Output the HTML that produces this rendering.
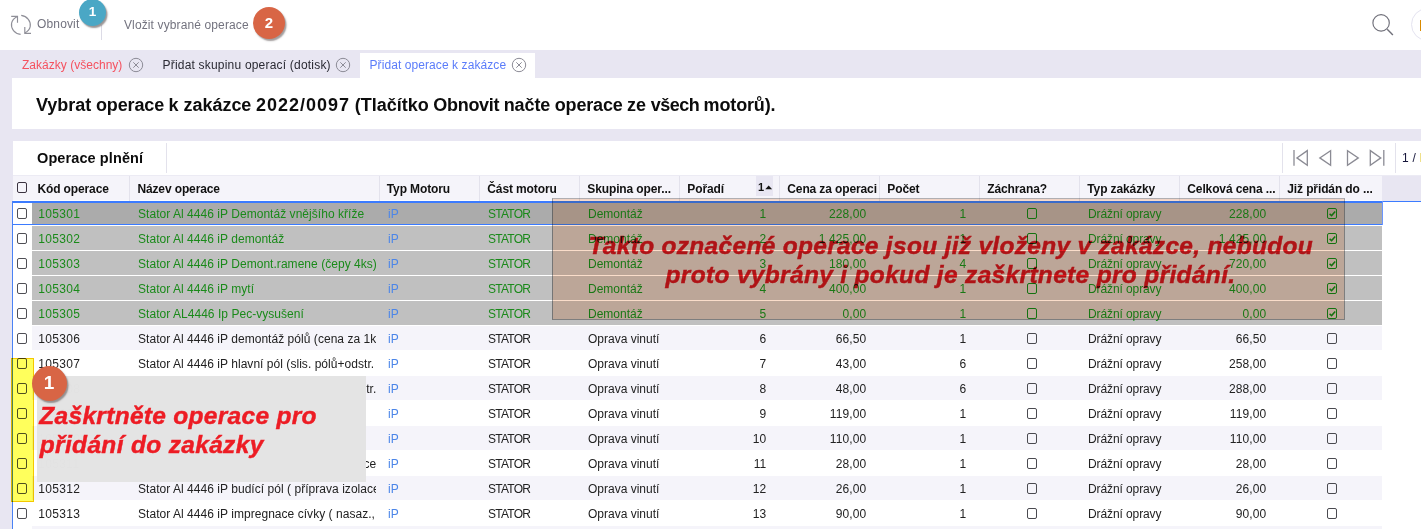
<!DOCTYPE html><html><head><meta charset="utf-8"><title>Pridat operace</title><style>
*{box-sizing:border-box;margin:0;padding:0}
html,body{width:1421px;height:529px;overflow:hidden;background:#fff}
body{position:relative;font-family:"Liberation Sans",sans-serif;font-size:12px;color:#222}
.abs{position:absolute}
.lav{background:#e8e6f2}
.t{position:absolute;white-space:nowrap;line-height:14px}
.tb{color:#73737f;font-size:12px;letter-spacing:.15px}
.tab{font-size:12px;top:58px;letter-spacing:.02px}
.hd{position:absolute;top:182px;font-weight:bold;color:#111;white-space:nowrap;line-height:14px;font-size:12px;letter-spacing:-.12px}
.sep{position:absolute;top:176px;width:1px;height:25px;background:#e3e2ec}
.row{position:absolute;left:13px;width:1369px;height:24px}
.row .c1{top:4px}
.row .bg{position:absolute;left:19px;right:0;top:0;bottom:0}
.c{position:absolute;top:6px;line-height:14px;white-space:nowrap;overflow:hidden}
.num{text-align:right;letter-spacing:.12px}
.code{letter-spacing:.32px}
.g{color:#1a8a1a}
.ip{color:#4c86e8}
.cb{position:absolute;top:7px;width:10.2px;height:11px;border:1.5px solid #4a4a50;border-radius:2px;background:transparent}
.stat{letter-spacing:-.75px}
.nm{letter-spacing:.04px}
.dr{letter-spacing:-.1px}
.g .cb, .cb.g{border-color:#148414}
.circ{position:absolute;border-radius:50%;color:#fff;font-weight:bold;text-align:center}
</style></head><body>
<div class="abs lav" style="left:0;top:50px;width:1421px;height:479px"></div>
<div class="abs" style="left:12px;top:78px;width:1409px;height:51px;background:#fff"></div>
<div class="abs" style="left:13px;top:141px;width:1408px;height:388px;background:#fff"></div>
<div class="abs" style="left:13px;top:175px;width:1408px;height:1px;background:#ecebf4"></div>
<div class="abs" style="left:13px;top:176px;width:1369px;height:25px;background:#f5f4fa"></div>
<div class="abs lav" style="left:1382px;top:176px;width:39px;height:25px"></div>
<div class="abs" style="left:13px;top:200px;width:1369px;height:1px;background:#fdfdff"></div>
<svg class="abs" style="left:9px;top:13px" width="24" height="24" viewBox="0 0 24 24" fill="none" stroke="#8f8f98" stroke-width="1.15" stroke-linecap="butt" stroke-linejoin="miter"><path d="M11.6 21.4 C5.6 20.6 1.6 15.6 2.6 10.2 C3.1 7.5 5.2 5.2 8.4 3.6"/><path d="M2.2 3.4 H8.5 V9.8"/><path d="M12.2 2.4 C18.2 3.2 22.2 8.2 21.2 13.6 C20.7 16.3 18.8 18.4 15.9 20.0"/><path d="M22 20.3 H15.8 V14"/></svg>
<div class="t tb" style="left:37px;top:17px">Obnovit</div>
<div class="abs" style="left:101px;top:25px;width:1px;height:15px;background:#dcdbe6"></div>
<div class="t tb" style="left:124px;top:18px;letter-spacing:.12px">Vložit vybrané operace</div>
<div class="circ" style="left:79px;top:-1px;width:27px;height:27px;background:#4aa7c5;box-shadow:1.5px 2px 1.5px rgba(70,60,60,.55);font-size:13.5px;line-height:26.5px">1</div>
<div class="circ" style="left:253px;top:7px;width:32px;height:32px;background:#d86545;box-shadow:1.5px 2px 1.5px rgba(70,60,60,.5);font-size:15px;line-height:31.5px">2</div>
<svg class="abs" style="left:1368px;top:10px" width="30" height="30" viewBox="0 0 30 30" fill="none" stroke="#70707a" stroke-width="1.15"><circle cx="13.1" cy="12.9" r="8.2"/><path d="M19.2 19.3 L24.9 25" stroke-width="1.4"/></svg>
<div class="abs" style="left:1411px;top:8px;width:33px;height:33px;border:1.3px solid #e4e3f0;border-radius:50%"></div>
<div class="abs" style="left:1420px;top:20px;width:2px;height:11px;background:#d98a00"></div>
<div class="abs" style="left:360px;top:53px;width:175px;height:25px;background:#fff"></div>
<div class="t tab" style="left:22px;color:#f5515f">Zakázky (všechny)</div>
<svg class="abs" style="left:127.6px;top:57.4px" width="16" height="16" viewBox="0 0 16 16" fill="none" stroke="#8c8b96" stroke-width="1"><circle cx="8" cy="8" r="6.7"/><path d="M5.3 5.3 L10.7 10.7 M10.7 5.3 L5.3 10.7"/></svg>
<div class="t tab" style="left:162.5px;color:#2a2a33;letter-spacing:.2px">Přidat skupinu operací (dotisk)</div>
<svg class="abs" style="left:335px;top:57.4px" width="16" height="16" viewBox="0 0 16 16" fill="none" stroke="#8c8b96" stroke-width="1"><circle cx="8" cy="8" r="6.7"/><path d="M5.3 5.3 L10.7 10.7 M10.7 5.3 L5.3 10.7"/></svg>
<div class="t tab" style="left:369.5px;color:#5b7cfa;letter-spacing:.08px">Přidat operace k zakázce</div>
<svg class="abs" style="left:510.5px;top:57.4px" width="16" height="16" viewBox="0 0 16 16" fill="none" stroke="#8c8b96" stroke-width="1"><circle cx="8" cy="8" r="6.7"/><path d="M5.3 5.3 L10.7 10.7 M10.7 5.3 L5.3 10.7"/></svg>
<div class="t" style="left:36px;top:94px;font-size:18px;line-height:22px;font-weight:bold;color:#0c0c0c;letter-spacing:0px">Vybrat</div>
<div class="t" style="left:96px;top:94px;font-size:18px;line-height:22px;font-weight:bold;color:#0c0c0c;letter-spacing:-0.15px">operace</div>
<div class="t" style="left:168.6px;top:94px;font-size:18px;line-height:22px;font-weight:bold;color:#0c0c0c;letter-spacing:0px">k</div>
<div class="t" style="left:183.6px;top:94px;font-size:18px;line-height:22px;font-weight:bold;color:#0c0c0c;letter-spacing:-0.05px">zakázce</div>
<div class="t" style="left:256px;top:94px;font-size:18px;line-height:22px;font-weight:bold;color:#0c0c0c;letter-spacing:1px">2022/0097</div>
<div class="t" style="left:354.8px;top:94px;font-size:18px;line-height:22px;font-weight:bold;color:#0c0c0c;letter-spacing:0px">(Tlačítko</div>
<div class="t" style="left:433.3px;top:94px;font-size:18px;line-height:22px;font-weight:bold;color:#0c0c0c;letter-spacing:-0.3px">Obnovit</div>
<div class="t" style="left:503.7px;top:94px;font-size:18px;line-height:22px;font-weight:bold;color:#0c0c0c;letter-spacing:-0.1px">načte</div>
<div class="t" style="left:554.7px;top:94px;font-size:18px;line-height:22px;font-weight:bold;color:#0c0c0c;letter-spacing:-0.15px">operace</div>
<div class="t" style="left:626.9px;top:94px;font-size:18px;line-height:22px;font-weight:bold;color:#0c0c0c;letter-spacing:0px">ze</div>
<div class="t" style="left:650.8px;top:94px;font-size:18px;line-height:22px;font-weight:bold;color:#0c0c0c;letter-spacing:-0.5px">všech</div>
<div class="t" style="left:703.6px;top:94px;font-size:18px;line-height:22px;font-weight:bold;color:#0c0c0c;letter-spacing:-0.15px">motorů).</div>
<div class="t" style="left:37px;top:149px;font-size:14.5px;line-height:18px;font-weight:bold;color:#0c0c0c;letter-spacing:.1px">Operace plnění</div>
<div class="abs" style="left:166px;top:143px;width:1px;height:30px;background:#e3e2ec"></div>
<div class="abs" style="left:1282px;top:143px;width:1px;height:30px;background:#e3e2ec"></div>
<div class="abs" style="left:1395px;top:143px;width:1px;height:30px;background:#e3e2ec"></div>
<svg class="abs" style="left:1290px;top:146px" width="100" height="24" viewBox="0 0 100 24" fill="none" stroke="#8b8b94" stroke-width="1.3" stroke-linejoin="miter"><path d="M4 4 V19.8"/><path d="M17.3 4.6 V19.2 L6.9 11.9 Z"/><path d="M40.6 4.6 V19.2 L29.8 11.9 Z"/><path d="M57.5 4.6 V19.2 L68.3 11.9 Z"/><path d="M80.3 4.6 V19.2 L90.8 11.9 Z"/><path d="M93.8 4 V19.8"/></svg>
<div class="t" style="left:1402px;top:151px;color:#15153a;letter-spacing:.3px">1 /</div>
<div class="abs" style="left:1420px;top:153px;width:1px;height:9px;background:#efe08a"></div>
<div class="cb" style="left:17px;top:182px;border-color:#3a3340"></div>
<div class="hd" style="left:37.4px">Kód operace</div>
<div class="hd" style="left:137.4px">Název operace</div>
<div class="hd" style="left:386.8px">Typ Motoru</div>
<div class="hd" style="left:487.3px">Část motoru</div>
<div class="hd" style="left:587.3px">Skupina oper...</div>
<div class="hd" style="left:687.3px">Pořadí</div>
<div class="hd" style="left:787.3px">Cena za operaci</div>
<div class="hd" style="left:887.3px">Počet</div>
<div class="hd" style="left:987.3px">Záchrana?</div>
<div class="hd" style="left:1087.3px">Typ zakázky</div>
<div class="hd" style="left:1187.3px">Celková cena ...</div>
<div class="hd" style="left:1287.3px">Již přidán do ...</div>
<div class="sep" style="left:129px"></div>
<div class="sep" style="left:379px"></div>
<div class="sep" style="left:479px"></div>
<div class="sep" style="left:579px"></div>
<div class="sep" style="left:679px"></div>
<div class="sep" style="left:779px"></div>
<div class="sep" style="left:879px"></div>
<div class="sep" style="left:979px"></div>
<div class="sep" style="left:1079px"></div>
<div class="sep" style="left:1179px"></div>
<div class="sep" style="left:1279px"></div>
<div class="abs lav" style="left:756px;top:176px;width:17px;height:20px"></div>
<div class="t" style="left:758px;top:180px;font-weight:bold;font-size:11px;color:#111">1</div>
<svg class="abs" style="left:764.5px;top:185px" width="8" height="5" viewBox="0 0 8 5"><path d="M0.3 4.2 L3.7 0.6 L7.1 4.2 Z" fill="#111"/></svg>
<div class="row g" style="top:203px;height:21px">
<div class="bg" style="background:#ababab"></div>
<div class="cb" style="left:4px;top:5px;border-color:#4f4f55"></div><div class="c c1 code" style="left:25.3px;width:88px">105301</div><div class="c c1 nm" style="left:125px;width:238.2px">Stator Al 4446 iP Demontáž vnějšího kříže</div><div class="c c1 ip" style="left:375px;width:80px">iP</div><div class="c c1 stat" style="left:475px;width:88px">STATOR</div><div class="c c1 " style="left:575px;width:88px">Demontáž</div><div class="c c1 num" style="left:666.6px;width:86.8px">1</div><div class="c c1 num" style="left:766.6px;width:86.8px">228,00</div><div class="c c1 num" style="left:866.6px;width:86.8px">1</div><div class="cb" style="left:1014px;top:5px"></div><div class="c c1 dr" style="left:1075px;width:88px">Drážní opravy</div><div class="c c1 num" style="left:1166.6px;width:86.8px">228,00</div><div class="cb" style="left:1314px;top:5px"></div><svg class="abs" style="left:1313.6px;top:5px" width="11" height="11" viewBox="0 0 11 11" fill="none" stroke="#148414" stroke-width="1.5"><path d="M2.6 5.9 L4.6 7.6 L8.2 3.6"/></svg>
</div>
<div class="row g" style="top:226px">
<div class="bg" style="background:#c0c0c0"></div>
<div class="cb" style="left:4px;top:7px;border-color:#4f4f55"></div><div class="c code" style="left:25.3px;width:88px">105302</div><div class="c nm" style="left:125px;width:238.2px">Stator Al 4446 iP demontáž</div><div class="c ip" style="left:375px;width:80px">iP</div><div class="c stat" style="left:475px;width:88px">STATOR</div><div class="c " style="left:575px;width:88px">Demontáž</div><div class="c num" style="left:666.6px;width:86.8px">2</div><div class="c num" style="left:766.6px;width:86.8px">1 425,00</div><div class="c num" style="left:866.6px;width:86.8px">1</div><div class="cb" style="left:1014px;top:7px"></div><div class="c dr" style="left:1075px;width:88px">Drážní opravy</div><div class="c num" style="left:1166.6px;width:86.8px">1 425,00</div><div class="cb" style="left:1314px;top:7px"></div><svg class="abs" style="left:1313.6px;top:7px" width="11" height="11" viewBox="0 0 11 11" fill="none" stroke="#148414" stroke-width="1.5"><path d="M2.6 5.9 L4.6 7.6 L8.2 3.6"/></svg>
</div>
<div class="row g" style="top:251px">
<div class="bg" style="background:#c0c0c0"></div>
<div class="cb" style="left:4px;top:7px;border-color:#4f4f55"></div><div class="c code" style="left:25.3px;width:88px">105303</div><div class="c nm" style="left:125px;width:238.2px">Stator Al 4446 iP Demont.ramene (čepy 4ks)</div><div class="c ip" style="left:375px;width:80px">iP</div><div class="c stat" style="left:475px;width:88px">STATOR</div><div class="c " style="left:575px;width:88px">Demontáž</div><div class="c num" style="left:666.6px;width:86.8px">3</div><div class="c num" style="left:766.6px;width:86.8px">180,00</div><div class="c num" style="left:866.6px;width:86.8px">4</div><div class="cb" style="left:1014px;top:7px"></div><div class="c dr" style="left:1075px;width:88px">Drážní opravy</div><div class="c num" style="left:1166.6px;width:86.8px">720,00</div><div class="cb" style="left:1314px;top:7px"></div><svg class="abs" style="left:1313.6px;top:7px" width="11" height="11" viewBox="0 0 11 11" fill="none" stroke="#148414" stroke-width="1.5"><path d="M2.6 5.9 L4.6 7.6 L8.2 3.6"/></svg>
</div>
<div class="row g" style="top:276px">
<div class="bg" style="background:#c0c0c0"></div>
<div class="cb" style="left:4px;top:7px;border-color:#4f4f55"></div><div class="c code" style="left:25.3px;width:88px">105304</div><div class="c nm" style="left:125px;width:238.2px">Stator Al 4446 iP mytí</div><div class="c ip" style="left:375px;width:80px">iP</div><div class="c stat" style="left:475px;width:88px">STATOR</div><div class="c " style="left:575px;width:88px">Demontáž</div><div class="c num" style="left:666.6px;width:86.8px">4</div><div class="c num" style="left:766.6px;width:86.8px">400,00</div><div class="c num" style="left:866.6px;width:86.8px">1</div><div class="cb" style="left:1014px;top:7px"></div><div class="c dr" style="left:1075px;width:88px">Drážní opravy</div><div class="c num" style="left:1166.6px;width:86.8px">400,00</div><div class="cb" style="left:1314px;top:7px"></div><svg class="abs" style="left:1313.6px;top:7px" width="11" height="11" viewBox="0 0 11 11" fill="none" stroke="#148414" stroke-width="1.5"><path d="M2.6 5.9 L4.6 7.6 L8.2 3.6"/></svg>
</div>
<div class="row g" style="top:301px">
<div class="bg" style="background:#c0c0c0"></div>
<div class="cb" style="left:4px;top:7px;border-color:#4f4f55"></div><div class="c code" style="left:25.3px;width:88px">105305</div><div class="c nm" style="left:125px;width:238.2px">Stator AL4446 Ip Pec-vysušení</div><div class="c ip" style="left:375px;width:80px">iP</div><div class="c stat" style="left:475px;width:88px">STATOR</div><div class="c " style="left:575px;width:88px">Demontáž</div><div class="c num" style="left:666.6px;width:86.8px">5</div><div class="c num" style="left:766.6px;width:86.8px">0,00</div><div class="c num" style="left:866.6px;width:86.8px">1</div><div class="cb" style="left:1014px;top:7px"></div><div class="c dr" style="left:1075px;width:88px">Drážní opravy</div><div class="c num" style="left:1166.6px;width:86.8px">0,00</div><div class="cb" style="left:1314px;top:7px"></div><svg class="abs" style="left:1313.6px;top:7px" width="11" height="11" viewBox="0 0 11 11" fill="none" stroke="#148414" stroke-width="1.5"><path d="M2.6 5.9 L4.6 7.6 L8.2 3.6"/></svg>
</div>
<div class="row " style="top:326px">
<div class="bg" style="background:#f5f4fa"></div>
<div class="cb" style="left:4px;top:7px;border-color:#4f4f55"></div><div class="c code" style="left:25.3px;width:88px">105306</div><div class="c nm" style="left:125px;width:238.2px">Stator Al 4446 iP demontáž pólů (cena za 1ks)</div><div class="c ip" style="left:375px;width:80px">iP</div><div class="c stat" style="left:475px;width:88px">STATOR</div><div class="c " style="left:575px;width:88px">Oprava vinutí</div><div class="c num" style="left:666.6px;width:86.8px">6</div><div class="c num" style="left:766.6px;width:86.8px">66,50</div><div class="c num" style="left:866.6px;width:86.8px">1</div><div class="cb" style="left:1014px;top:7px"></div><div class="c dr" style="left:1075px;width:88px">Drážní opravy</div><div class="c num" style="left:1166.6px;width:86.8px">66,50</div><div class="cb" style="left:1314px;top:7px"></div>
</div>
<div class="row " style="top:351px">
<div class="bg" style="background:#ffffff"></div>
<div class="cb" style="left:4px;top:7px;border-color:#4f4f55"></div><div class="c code" style="left:25.3px;width:88px">105307</div><div class="c nm" style="left:125px;width:238.2px">Stator Al 4446 iP hlavní pól (slis. pólů+odstr.</div><div class="c ip" style="left:375px;width:80px">iP</div><div class="c stat" style="left:475px;width:88px">STATOR</div><div class="c " style="left:575px;width:88px">Oprava vinutí</div><div class="c num" style="left:666.6px;width:86.8px">7</div><div class="c num" style="left:766.6px;width:86.8px">43,00</div><div class="c num" style="left:866.6px;width:86.8px">6</div><div class="cb" style="left:1014px;top:7px"></div><div class="c dr" style="left:1075px;width:88px">Drážní opravy</div><div class="c num" style="left:1166.6px;width:86.8px">258,00</div><div class="cb" style="left:1314px;top:7px"></div>
</div>
<div class="row " style="top:376px">
<div class="bg" style="background:#f5f4fa"></div>
<div class="cb" style="left:4px;top:7px;border-color:#4f4f55"></div><div class="c code" style="left:25.3px;width:88px">105308</div><div class="c nm" style="left:125px;width:238.2px"></div><div class="c ip" style="left:375px;width:80px">iP</div><div class="c stat" style="left:475px;width:88px">STATOR</div><div class="c " style="left:575px;width:88px">Oprava vinutí</div><div class="c num" style="left:666.6px;width:86.8px">8</div><div class="c num" style="left:766.6px;width:86.8px">48,00</div><div class="c num" style="left:866.6px;width:86.8px">6</div><div class="cb" style="left:1014px;top:7px"></div><div class="c dr" style="left:1075px;width:88px">Drážní opravy</div><div class="c num" style="left:1166.6px;width:86.8px">288,00</div><div class="cb" style="left:1314px;top:7px"></div><div class="c" style="left:327px;width:36.3px;text-align:right">tr.</div>
</div>
<div class="row " style="top:401px">
<div class="bg" style="background:#ffffff"></div>
<div class="cb" style="left:4px;top:7px;border-color:#4f4f55"></div><div class="c code" style="left:25.3px;width:88px">105309</div><div class="c nm" style="left:125px;width:238.2px"></div><div class="c ip" style="left:375px;width:80px">iP</div><div class="c stat" style="left:475px;width:88px">STATOR</div><div class="c " style="left:575px;width:88px">Oprava vinutí</div><div class="c num" style="left:666.6px;width:86.8px">9</div><div class="c num" style="left:766.6px;width:86.8px">119,00</div><div class="c num" style="left:866.6px;width:86.8px">1</div><div class="cb" style="left:1014px;top:7px"></div><div class="c dr" style="left:1075px;width:88px">Drážní opravy</div><div class="c num" style="left:1166.6px;width:86.8px">119,00</div><div class="cb" style="left:1314px;top:7px"></div>
</div>
<div class="row " style="top:426px">
<div class="bg" style="background:#f5f4fa"></div>
<div class="cb" style="left:4px;top:7px;border-color:#4f4f55"></div><div class="c code" style="left:25.3px;width:88px">105310</div><div class="c nm" style="left:125px;width:238.2px"></div><div class="c ip" style="left:375px;width:80px">iP</div><div class="c stat" style="left:475px;width:88px">STATOR</div><div class="c " style="left:575px;width:88px">Oprava vinutí</div><div class="c num" style="left:666.6px;width:86.8px">10</div><div class="c num" style="left:766.6px;width:86.8px">110,00</div><div class="c num" style="left:866.6px;width:86.8px">1</div><div class="cb" style="left:1014px;top:7px"></div><div class="c dr" style="left:1075px;width:88px">Drážní opravy</div><div class="c num" style="left:1166.6px;width:86.8px">110,00</div><div class="cb" style="left:1314px;top:7px"></div>
</div>
<div class="row " style="top:451px">
<div class="bg" style="background:#ffffff"></div>
<div class="cb" style="left:4px;top:7px;border-color:#4f4f55"></div><div class="c code" style="left:25.3px;width:88px">105311</div><div class="c nm" style="left:125px;width:238.2px"></div><div class="c ip" style="left:375px;width:80px">iP</div><div class="c stat" style="left:475px;width:88px">STATOR</div><div class="c " style="left:575px;width:88px">Oprava vinutí</div><div class="c num" style="left:666.6px;width:86.8px">11</div><div class="c num" style="left:766.6px;width:86.8px">28,00</div><div class="c num" style="left:866.6px;width:86.8px">1</div><div class="cb" style="left:1014px;top:7px"></div><div class="c dr" style="left:1075px;width:88px">Drážní opravy</div><div class="c num" style="left:1166.6px;width:86.8px">28,00</div><div class="cb" style="left:1314px;top:7px"></div><div class="c" style="left:327px;width:36.3px;text-align:right">ce</div>
</div>
<div class="row " style="top:476px">
<div class="bg" style="background:#f5f4fa"></div>
<div class="cb" style="left:4px;top:7px;border-color:#4f4f55"></div><div class="c code" style="left:25.3px;width:88px">105312</div><div class="c nm" style="left:125px;width:238.2px">Stator Al 4446 iP budící pól ( příprava izolace)</div><div class="c ip" style="left:375px;width:80px">iP</div><div class="c stat" style="left:475px;width:88px">STATOR</div><div class="c " style="left:575px;width:88px">Oprava vinutí</div><div class="c num" style="left:666.6px;width:86.8px">12</div><div class="c num" style="left:766.6px;width:86.8px">26,00</div><div class="c num" style="left:866.6px;width:86.8px">1</div><div class="cb" style="left:1014px;top:7px"></div><div class="c dr" style="left:1075px;width:88px">Drážní opravy</div><div class="c num" style="left:1166.6px;width:86.8px">26,00</div><div class="cb" style="left:1314px;top:7px"></div>
</div>
<div class="row " style="top:501px">
<div class="bg" style="background:#ffffff"></div>
<div class="cb" style="left:4px;top:7px;border-color:#4f4f55"></div><div class="c code" style="left:25.3px;width:88px">105313</div><div class="c nm" style="left:125px;width:238.2px">Stator Al 4446 iP impregnace cívky ( nasaz.,</div><div class="c ip" style="left:375px;width:80px">iP</div><div class="c stat" style="left:475px;width:88px">STATOR</div><div class="c " style="left:575px;width:88px">Oprava vinutí</div><div class="c num" style="left:666.6px;width:86.8px">13</div><div class="c num" style="left:766.6px;width:86.8px">90,00</div><div class="c num" style="left:866.6px;width:86.8px">1</div><div class="cb" style="left:1014px;top:7px"></div><div class="c dr" style="left:1075px;width:88px">Drážní opravy</div><div class="c num" style="left:1166.6px;width:86.8px">90,00</div><div class="cb" style="left:1314px;top:7px"></div>
</div>
<div class="row " style="top:526px">
<div class="bg" style="background:#f5f4fa"></div>
<div class="cb" style="left:4px;top:7px;border-color:#4f4f55"></div><div class="c code" style="left:25.3px;width:88px">105314</div><div class="c nm" style="left:125px;width:238.2px">Stator Al 4446 iP</div><div class="c ip" style="left:375px;width:80px">iP</div><div class="c stat" style="left:475px;width:88px">STATOR</div><div class="c " style="left:575px;width:88px">Oprava vinutí</div><div class="c num" style="left:666.6px;width:86.8px">14</div><div class="c num" style="left:766.6px;width:86.8px">0,00</div><div class="c num" style="left:866.6px;width:86.8px">1</div><div class="cb" style="left:1014px;top:7px"></div><div class="c dr" style="left:1075px;width:88px">Drážní opravy</div><div class="c num" style="left:1166.6px;width:86.8px">0,00</div><div class="cb" style="left:1314px;top:7px"></div>
</div>
<div class="abs" style="left:12px;top:201px;width:1409px;height:1px;background:#3b7bff"></div>
<div class="abs" style="left:12px;top:202px;width:1371px;height:1px;background:#3b7bff"></div>
<div class="abs" style="left:12px;top:224px;width:1371px;height:1px;background:#3b7bff"></div>
<div class="abs" style="left:1381.5px;top:201px;width:1.5px;height:24px;background:#6b96ff"></div>
<div class="abs" style="left:12px;top:201px;width:1px;height:328px;background:#4a82f5"></div>
<div class="abs" style="left:552px;top:198px;width:793px;height:122px;background:rgb(250,221,202);mix-blend-mode:multiply;border:1px solid #a8a8a8;border-top-color:#b6b6b6;border-left-color:#9c9c9c"></div>
<div style="position:absolute;color:#ed1c24;-webkit-text-stroke:.45px #ed1c24;font-weight:bold;font-style:italic;font-size:24.5px;line-height:29px;white-space:nowrap;mix-blend-mode:multiply;left:588.5px;top:231px;letter-spacing:.3px">Takto označené operace jsou již vloženy v zakázce, nebudou</div>
<div style="position:absolute;color:#ed1c24;-webkit-text-stroke:.45px #ed1c24;font-weight:bold;font-style:italic;font-size:24.5px;line-height:29px;white-space:nowrap;mix-blend-mode:multiply;left:665.5px;top:259.8px;letter-spacing:.33px">proto vybrány i pokud je zaškrtnete pro přidání.</div>
<div class="abs" style="left:11px;top:358px;width:23px;height:144px;background:rgb(255,255,92);mix-blend-mode:multiply;border:1.5px solid #f4c800"></div>
<div class="abs" style="left:37px;top:376px;width:329px;height:106px;background:rgba(228,228,228,.992)"></div>
<div style="position:absolute;color:#ed1c24;-webkit-text-stroke:.45px #ed1c24;font-weight:bold;font-style:italic;font-size:24.5px;line-height:29px;white-space:nowrap;left:39.3px;top:400.6px;letter-spacing:.3px">Zaškrtněte operace pro</div>
<div style="position:absolute;color:#ed1c24;-webkit-text-stroke:.45px #ed1c24;font-weight:bold;font-style:italic;font-size:24.5px;line-height:29px;white-space:nowrap;left:39.8px;top:429.6px;letter-spacing:.33px">přidání do zakázky</div>
<div class="circ" style="left:31.5px;top:365.5px;width:35px;height:35px;background:#d86545;box-shadow:1.5px 2px 1.5px rgba(70,60,60,.5);font-size:19px;line-height:34.5px">1</div>
</body></html>
